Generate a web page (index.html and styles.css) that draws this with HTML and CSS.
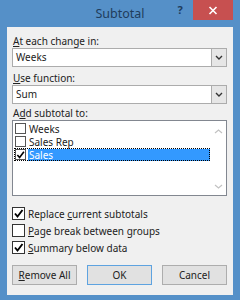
FILE: index.html
```html
<!DOCTYPE html>
<html lang="en">
<head>
    <meta charset="UTF-8">
    <title>Subtotal</title>
    <link rel="stylesheet" href="styles.css">
</head>
<body>
    <div class="window">
        <div class="titlebar">
            <span class="title-spacer"></span>
            <span class="title">Subtotal</span>
            <span class="help">?</span>
            <span class="close">
                <svg width="10" height="9" viewBox="0 0 10 9"><path d="M1.5 1 L8.5 8 M8.5 1 L1.5 8" stroke="#fff" stroke-width="1.6"/></svg>
            </span>
        </div>

        <div class="client">
            <div class="label label-first"><u>A</u>t each change in:</div>
            <div class="combo">
                <span class="combo-value">Weeks</span>
                <span class="combo-btn">
                    <svg width="8" height="5" viewBox="0 0 8 5"><path d="M1 1 L4 4 L7 1" fill="none" stroke="#333" stroke-width="1.4"/></svg>
                </span>
            </div>

            <div class="label label-second"><u>U</u>se function:</div>
            <div class="combo">
                <span class="combo-value">Sum</span>
                <span class="combo-btn">
                    <svg width="8" height="5" viewBox="0 0 8 5"><path d="M1 1 L4 4 L7 1" fill="none" stroke="#333" stroke-width="1.4"/></svg>
                </span>
            </div>

            <div class="label label-third">A<u>d</u>d subtotal to:</div>
            <div class="listbox">
                <div class="items">
                    <div class="item">
                        <span class="box"></span>
                        <span class="item-text">Weeks</span>
                    </div>
                    <div class="item">
                        <span class="box"></span>
                        <span class="item-text">Sales Rep</span>
                    </div>
                    <div class="item item-focus">
                        <span class="box">
                            <svg width="10" height="10" viewBox="0 0 10 10"><path d="M1.5 5 L4 7.8 L8.8 1.5" fill="none" stroke="#000" stroke-width="1.8"/></svg>
                        </span>
                        <span class="item-text item-selected">Sales</span>
                    </div>
                </div>
                <div class="scroll">
                    <svg width="9" height="5" viewBox="0 0 9 5"><path d="M1 4 L4.5 1 L8 4" fill="none" stroke="#c2c2c2" stroke-width="1.2"/></svg>
                    <svg width="9" height="5" viewBox="0 0 9 5"><path d="M1 1 L4.5 4 L8 1" fill="none" stroke="#c2c2c2" stroke-width="1.2"/></svg>
                </div>
            </div>

            <div class="options">
                <div class="option">
                    <span class="box box-large">
                        <svg width="11" height="11" viewBox="0 0 11 11"><path d="M2 5.5 L4.5 8.5 L9.5 2" fill="none" stroke="#000" stroke-width="1.9"/></svg>
                    </span>
                    <span>Replace <u>c</u>urrent subtotals</span>
                </div>
                <div class="option">
                    <span class="box box-large"></span>
                    <span><u>P</u>age break between groups</span>
                </div>
                <div class="option">
                    <span class="box box-large">
                        <svg width="11" height="11" viewBox="0 0 11 11"><path d="M2 5.5 L4.5 8.5 L9.5 2" fill="none" stroke="#000" stroke-width="1.9"/></svg>
                    </span>
                    <span><u>S</u>ummary below data</span>
                </div>
            </div>

            <div class="buttons">
                <button type="button"><u>R</u>emove All</button>
                <button type="button" class="default">OK</button>
                <button type="button">Cancel</button>
            </div>
        </div>
    </div>
</body>
</html>
```

FILE: styles.css
```css
body {
    margin: 0;
    font-family: "Noto Sans", sans-serif;
    font-size: 10px;
    color: #222;
}

.window {
    width: 240px;
    height: 300px;
    box-sizing: border-box;
    padding: 0 7px 5px;
    background-color: #5590c8;
    display: flex;
    flex-direction: column;
}

.titlebar {
    height: 27px;
    display: flex;
    align-items: flex-start;
    flex-shrink: 0;
}

.title-spacer {
    width: 59px;
}

.title {
    flex: 1;
    text-align: center;
    font-size: 12.5px;
    line-height: 28px;
    color: #1f3d5c;
}

.help {
    width: 12px;
    margin-right: 7px;
    text-align: center;
    font-weight: bold;
    font-size: 11px;
    line-height: 20px;
    color: #1f3d5c;
}

.close {
    width: 40px;
    height: 20px;
    background-color: #c75050;
    display: flex;
    align-items: center;
    justify-content: center;
}

.client {
    flex: 1;
    background-color: #f0f0f0;
    padding: 0 6px 0 5px;
    display: flex;
    flex-direction: column;
}

.label {
    line-height: 14px;
    padding-left: 1px;
}

.label-first {
    margin-top: 7px;
}

.label-second {
    margin-top: 4px;
}

.label-third {
    margin-top: 2px;
}

.combo {
    height: 19px;
    box-sizing: border-box;
    border: 1px solid #acacac;
    background-color: #fff;
    display: flex;
}

.combo-value {
    flex: 1;
    padding-left: 3px;
    line-height: 17px;
}

.combo-btn {
    width: 14px;
    background-color: #e6e6e6;
    border-left: 1px solid #acacac;
    display: flex;
    align-items: center;
    justify-content: center;
}

.listbox {
    height: 76px;
    box-sizing: border-box;
    border: 1px solid #828790;
    background-color: #fff;
    display: flex;
}

.items {
    flex: 1;
    padding: 1px 1px 0 1px;
}

.item {
    height: 13px;
    display: flex;
    align-items: center;
    gap: 2px;
    padding-left: 1px;
}

.item-focus {
    outline: 1px dotted #000;
    outline-offset: -1px;
}

.item-text {
    flex: 1;
    line-height: 12px;
    padding-left: 1px;
}

.item-selected {
    background-color: #3399ff;
    color: #fff;
}

.box {
    width: 11px;
    height: 11px;
    box-sizing: border-box;
    border: 1px solid #555;
    background-color: #fff;
    display: flex;
    align-items: center;
    justify-content: center;
    flex-shrink: 0;
}

.box-large {
    width: 13px;
    height: 13px;
    border-color: #333;
}

.scroll {
    width: 15px;
    display: flex;
    flex-direction: column;
    align-items: center;
    justify-content: space-between;
    padding: 8px 0 6px;
}

.options {
    margin-top: 9px;
}

.option {
    height: 17px;
    display: flex;
    align-items: center;
    gap: 3px;
}

.buttons {
    margin-top: 9px;
    display: grid;
    grid-template-columns: repeat(3, 1fr);
    column-gap: 10px;
}

button {
    height: 20px;
    padding: 0;
    font-family: "Noto Sans", sans-serif;
    font-size: 10px;
    color: #222;
    background-color: #e1e1e1;
    border: 1px solid #adadad;
}

button.default {
    border-color: #5ea3e0;
}
```
